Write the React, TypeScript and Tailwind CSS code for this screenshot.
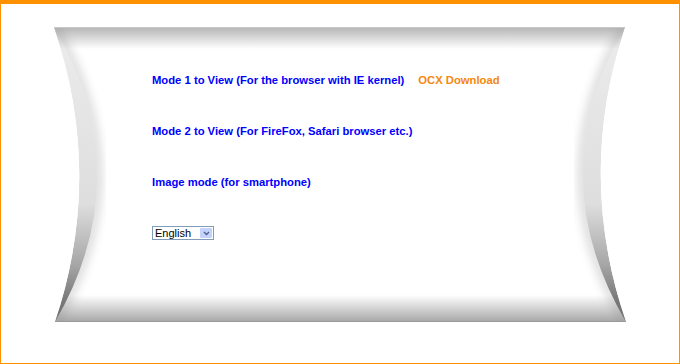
import React from 'react';

// 枕型パネルの背景(装飾用の描画)
const PillowPanel: React.FC = () => (
  <svg
    className="absolute inset-0"
    width="572"
    height="295"
    viewBox="0 0 572 295"
    aria-hidden="true"
  >
    <defs>
      <clipPath id="pillow">
        <path d="M0,0 L571,0 Q522,148 572,295 L1,295 Q50,148 0,0 Z" />
      </clipPath>
      <linearGradient id="side" x1="0" y1="0" x2="0" y2="1">
        <stop offset="0" stopColor="#ececec" />
        <stop offset="0.6" stopColor="#dedede" />
        <stop offset="0.8" stopColor="#a8a8a8" />
        <stop offset="1" stopColor="#5c5c5c" />
      </linearGradient>
      <linearGradient id="top" x1="0" y1="0" x2="0" y2="1">
        <stop offset="0" stopColor="#8c8c8c" stopOpacity="0.65" />
        <stop offset="1" stopColor="#8c8c8c" stopOpacity="0" />
      </linearGradient>
      <linearGradient id="bottom" x1="0" y1="0" x2="0" y2="1">
        <stop offset="0" stopColor="#808080" stopOpacity="0" />
        <stop offset="1" stopColor="#808080" stopOpacity="0.7" />
      </linearGradient>
      <filter id="soft" x="-20%" y="-20%" width="140%" height="140%">
        <feGaussianBlur stdDeviation="5" />
      </filter>
    </defs>
    <g clipPath="url(#pillow)">
      <rect x="0" y="0" width="572" height="295" fill="#ffffff" />
      {/* 内側の影 */}
      <path d="M0,0 Q86,148 1,295" fill="none" stroke="#000" strokeOpacity="0.14" strokeWidth="10" filter="url(#soft)" />
      <path d="M571,0 Q486,148 572,295" fill="none" stroke="#000" strokeOpacity="0.14" strokeWidth="10" filter="url(#soft)" />
      {/* 両サイドの帯 */}
      <path d="M0,0 Q50,148 1,295 Q86,148 0,0 Z" fill="url(#side)" />
      <path d="M571,0 Q522,148 572,295 Q486,148 571,0 Z" fill="url(#side)" />
      {/* 上下のグラデーション */}
      <rect x="0" y="0" width="572" height="22" fill="url(#top)" />
      <rect x="0" y="268" width="572" height="27" fill="url(#bottom)" />
      <rect x="0" y="0" width="572" height="1" fill="#c8c8c8" />
      <rect x="0" y="294" width="572" height="1" fill="#9a9a9a" />
    </g>
  </svg>
);

const LanguageSelect: React.FC = () => (
  <div className="flex h-[14px] w-[62px] items-stretch border border-[#7f9db9] bg-white">
    <span className="flex-1 pl-[2px] text-[11px] leading-[12px] text-black">English</span>
    <span className="m-[1px] flex w-[12px] items-center justify-center rounded-[1px] bg-[#c3d3fd]">
      <svg width="7" height="5" viewBox="0 0 7 5">
        <path d="M1,1 L3.5,3.5 L6,1" fill="none" stroke="#4d6185" strokeWidth="1.4" />
      </svg>
    </span>
  </div>
);

export default function App() {
  return (
    <div className="h-[364px] w-[680px] border-x border-b border-t-4 border-[#ff9000] bg-white font-['Liberation_Sans',Arial,sans-serif]">
      <div className="relative ml-[53px] mt-[23px] h-[295px] w-[572px]">
        <PillowPanel />
        <div className="relative flex flex-col items-start pl-[98px] pt-[45px] text-[11.25px] font-bold leading-[16px]">
          <div className="flex">
            <a className="text-[#0000ff]">Mode 1 to View (For the browser with IE kernel)</a>
            <a className="ml-[14px] text-[#f5880f]">OCX Download</a>
          </div>
          <a className="mt-[35px] text-[#0000ff]">Mode 2 to View (For FireFox, Safari browser etc.)</a>
          <a className="mt-[35px] text-[#0000ff]">Image mode (for smartphone)</a>
          <div className="mt-[36px] font-normal">
            <LanguageSelect />
          </div>
        </div>
      </div>
    </div>
  );
}
